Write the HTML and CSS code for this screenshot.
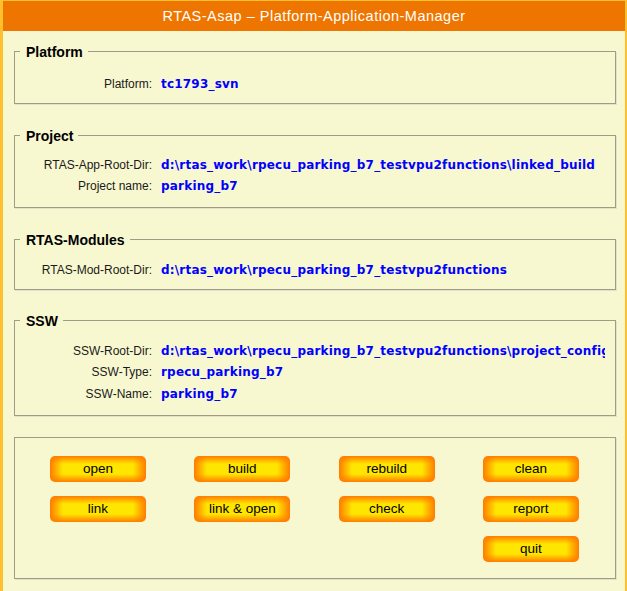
FILE: index.html
```html
<!DOCTYPE html>
<html>
<head>
<meta charset="utf-8">
<title>RTAS-Asap</title>
<link rel="stylesheet" href="styles.css">
</head>
<body>
<div class="titlebar">RTAS-Asap – Platform-Application-Manager</div>
<main class="content">
  <fieldset class="group group-platform">
    <legend>Platform</legend>
    <div class="rows">
      <span class="label">Platform:</span><span class="value">tc1793_svn</span>
    </div>
  </fieldset>
  <fieldset class="group group-project">
    <legend>Project</legend>
    <div class="rows">
      <span class="label">RTAS-App-Root-Dir:</span><span class="value">d:\rtas_work\rpecu_parking_b7_testvpu2functions\linked_build</span>
      <span class="label">Project name:</span><span class="value">parking_b7</span>
    </div>
  </fieldset>
  <fieldset class="group group-modules">
    <legend>RTAS-Modules</legend>
    <div class="rows">
      <span class="label">RTAS-Mod-Root-Dir:</span><span class="value">d:\rtas_work\rpecu_parking_b7_testvpu2functions</span>
    </div>
  </fieldset>
  <fieldset class="group group-ssw">
    <legend>SSW</legend>
    <div class="rows">
      <span class="label">SSW-Root-Dir:</span><span class="value">d:\rtas_work\rpecu_parking_b7_testvpu2functions\project_config</span>
      <span class="label">SSW-Type:</span><span class="value">rpecu_parking_b7</span>
      <span class="label">SSW-Name:</span><span class="value">parking_b7</span>
    </div>
  </fieldset>
  <div class="actions">
    <button class="btn">open</button>
    <button class="btn">build</button>
    <button class="btn">rebuild</button>
    <button class="btn">clean</button>
    <button class="btn">link</button>
    <button class="btn">link &amp; open</button>
    <button class="btn">check</button>
    <button class="btn">report</button>
    <button class="btn btn-quit">quit</button>
  </div>
</main>
</body>
</html>
```

FILE: styles.css
```css
html, body {
  margin: 0;
  padding: 0;
}
body {
  box-sizing: border-box;
  min-height: 100vh;
  background: #f8f8d0;
  border-top: 1px solid #ffc030;
  border-left: 3px solid #ffc030;
  border-right: 2px solid #ffc030;
  font-family: "Liberation Sans", Arial, sans-serif;
  color: #1a1a1a;
}
.titlebar {
  height: 30px;
  line-height: 30px;
  background: #ee7600;
  color: #ffffff;
  text-align: center;
  font-size: 14.5px;
  letter-spacing: 0.5px;
}
.content {
  display: flex;
  flex-direction: column;
  padding: 12px 9px 0 11px;
}
.group {
  margin: 0;
  padding: 0;
  min-width: 0;
  border: 1px solid #9d9d88;
  box-shadow: 1px 1px 0 #e2e2c6;
}
.group legend {
  margin-left: 5px;
  padding: 0 5px 0 6px;
  height: 16px;
  line-height: 18px;
  font-weight: bold;
  font-size: 14px;
  color: #000;
}
.group-platform { margin-bottom: 23px; }
.group-platform .rows { padding: 14px 0 9px; }
.group-project { margin-bottom: 23px; }
.group-project .rows { padding: 11px 0 11px; }
.group-modules { margin-bottom: 22px; }
.group-modules .rows { padding: 12px 0 9px; }
.group-ssw { margin-bottom: 21px; }
.group-ssw .rows { padding: 12px 0 10px; grid-auto-rows: 21.5px; }

.rows {
  display: grid;
  grid-template-columns: 137px minmax(0, 1fr);
  grid-auto-rows: 21px;
  column-gap: 9px;
  align-items: center;
}
.label {
  text-align: right;
  font-size: 12px;
  color: #1a1a1a;
  white-space: nowrap;
}
.value {
  font-family: "DejaVu Sans", Verdana, sans-serif;
  font-weight: bold;
  font-size: 12px;
  letter-spacing: 0.2px;
  color: #0000ff;
  white-space: nowrap;
  overflow: hidden;
  margin-right: 10px;
}
.actions {
  border: 1px solid #9d9d88;
  box-shadow: 1px 1px 0 #e2e2c6;
  display: grid;
  grid-template-columns: repeat(4, 96px);
  grid-auto-rows: 26px;
  column-gap: 48.33px;
  row-gap: 14px;
  padding: 18px 0 16px 35px;
}
.btn {
  margin: 0;
  padding: 0;
  border: 0;
  border-radius: 5px;
  font-family: "Liberation Sans", Arial, sans-serif;
  font-size: 13.5px;
  color: #000;
  background:
    linear-gradient(to bottom, #ff7c00 0, rgba(255, 124, 0, 0) 8px, rgba(255, 124, 0, 0) calc(100% - 8px), #ff7c00 100%),
    linear-gradient(to right, #ff7c00 0, #ffe600 13px, #ffe600 calc(100% - 13px), #ff7c00 100%);
}
.btn-quit {
  grid-column: 4;
}
```
